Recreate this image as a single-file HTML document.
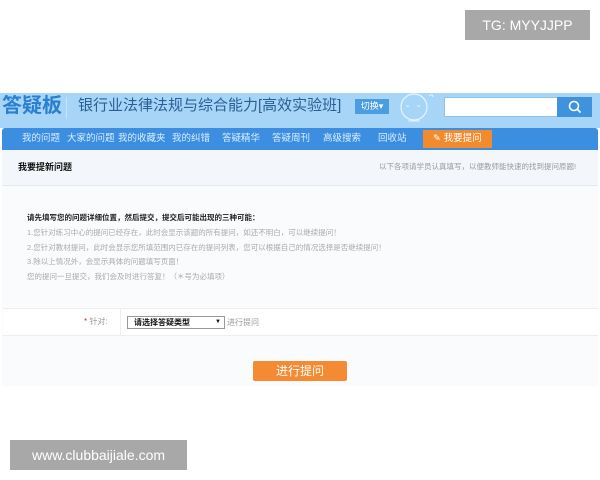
<!DOCTYPE html>
<html><head><meta charset="utf-8"><style>
*{margin:0;padding:0;box-sizing:border-box}
body{width:600px;height:480px;background:#fff;position:relative;overflow:hidden;font-family:"Liberation Sans","Noto Sans CJK SC",sans-serif}
.a{position:absolute;white-space:nowrap}
.wm{background:#a8a8a8;color:#fff;font-size:14px;line-height:30px;text-align:center}
</style></head><body>
<div class="a wm" style="left:465px;top:10px;width:125px;height:30px;">TG: MYYJJPP</div>
<div class="a" style="left:0;top:93px;width:600px;height:35px;background:#a6d5f7"></div>
<div class="a" style="left:2px;top:93px;font-size:20px;font-weight:bold;color:#2a7fd0;line-height:27px">答疑板</div>
<div class="a" style="left:66px;top:97px;width:1px;height:22px;background:#c9e3f7"></div>
<div class="a" style="left:78px;top:95px;font-size:15px;color:#2a5f95;line-height:22px">银行业法律法规与综合能力[高效实验班]</div>
<div class="a" style="left:355px;top:99px;width:34px;height:15px;background:#4a9de0;color:#fff;font-size:9px;line-height:15px;text-align:center">切换▾</div>
<svg class="a" style="left:398px;top:90px" width="40" height="38"><circle cx="16" cy="17" r="13" fill="none" stroke="#e8f4fd" stroke-width="1.2"/><path d="M10 31 L22 31 M8 16 l3 0 M19 16 l3 0 M31 6 q3 -3 4 1" stroke="#e8f4fd" fill="none"/></svg>
<div class="a" style="left:444px;top:97px;width:114px;height:20px;background:#fff;border:1px solid #8cc3ec"></div>
<div class="a" style="left:557px;top:97px;width:35px;height:20px;background:#3f93dc"></div>
<svg class="a" style="left:567px;top:99px" width="16" height="16"><circle cx="7" cy="7" r="4.5" fill="none" stroke="#fff" stroke-width="1.6"/><path d="M10 10 L13.5 13.5" stroke="#fff" stroke-width="1.8"/></svg>
<div class="a" style="left:2px;top:128px;width:596px;height:22px;background:#3b8ee0;border-radius:3px 3px 0 0"></div>
<div class="a" style="left:0;top:128px;width:600px;height:22px;color:#dbeeff;font-size:9.5px;line-height:22px">
<span class="a" style="left:22px">我的问题</span><span class="a" style="left:67px">大家的问题</span><span class="a" style="left:118px">我的收藏夹</span><span class="a" style="left:172px">我的纠错</span><span class="a" style="left:222px">答疑精华</span><span class="a" style="left:272px">答疑周刊</span><span class="a" style="left:323px">高级搜索</span><span class="a" style="left:378px">回收站</span></div>
<div class="a" style="left:423px;top:130px;width:69px;height:18px;background:#f28a2e;color:#fff;font-size:9.5px;line-height:18px;padding-left:10px">✎ 我要提问</div>
<div class="a" style="left:2px;top:150px;width:596px;height:36px;background:#f3f7fb;border-bottom:1px solid #e3e9ef"></div>
<div class="a" style="left:18px;top:160px;font-size:9px;font-weight:bold;color:#111;line-height:14px">我要提新问题</div>
<div class="a" style="left:379px;top:161px;font-size:7.5px;color:#999;line-height:12px">以下各项请学员认真填写，以便教师能快速的找到提问原题!</div>
<div class="a" style="left:2px;top:186px;width:596px;height:200px;background:#fafbfc"></div>
<div class="a" style="left:27px;top:211px;font-size:7.5px;line-height:14.8px;color:#aaa">
<div style="color:#222;font-weight:bold">请先填写您的问题详细位置，然后提交，提交后可能出现的三种可能：</div>
<div>1.您针对练习中心的提问已经存在，此时会显示该题的所有提问，如还不明白，可以继续提问！</div>
<div>2.您针对教材提问，此时会显示您所填范围内已存在的提问列表，您可以根据自己的情况选择是否继续提问！</div>
<div>3.除以上情况外，会显示具体的问题填写页面！</div>
<div>您的提问一旦提交，我们会及时进行答复！（＊号为必填项）</div></div>
<div class="a" style="left:3px;top:308px;width:595px;height:28px;background:#fff;border-top:1px solid #eee;border-bottom:1px solid #eee"></div>
<div class="a" style="left:120px;top:309px;width:1px;height:26px;background:#eee"></div>
<div class="a" style="left:84px;top:316px;font-size:8px;color:#999;line-height:12px"><span style="color:#d33">*</span> 针对:</div>
<div class="a" style="left:127px;top:316px;width:98px;height:13px;border:1px solid #999;background:#fff;font-size:8px;line-height:11px;padding-left:6px;color:#111;font-weight:bold">请选择答疑类型<span style="position:absolute;right:3px;font-size:6px">▼</span></div>
<div class="a" style="left:227px;top:317px;font-size:8px;color:#999;line-height:12px">进行提问</div>
<div class="a" style="left:253px;top:361px;width:94px;height:20px;background:#f48a32;color:#fff;font-size:12px;line-height:20px;text-align:center;border-radius:2px">进行提问</div>
<div class="a wm" style="left:10px;top:440px;width:177px;height:30px;">www.clubbaijiale.com</div>
</body></html>
